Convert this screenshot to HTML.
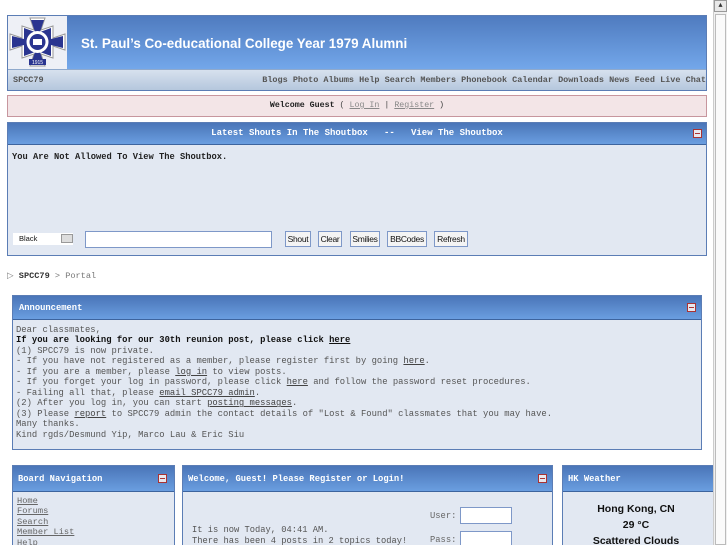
<!DOCTYPE html>
<html style="overflow:hidden;height:545px"><head><meta charset="utf-8"><style>
*{box-sizing:border-box;margin:0;padding:0}
body{width:727px;height:545px;overflow:hidden;background:#fff;font-family:"Liberation Mono",monospace;font-size:8.8px;color:#333;position:relative}
.abs{position:absolute}
.hd{background:linear-gradient(#4a75b8,#6a9ee0);color:#fff;font-weight:bold;border-bottom:1px solid #3d649e}
.body{background:#e2e8f2}
.box{border:1px solid #5b7db5;overflow:hidden}
u{color:#444}
.mini{position:absolute;width:9px;height:9px;background:#e8e8ee;border:1px solid #a33;}
.mini:after{content:"";position:absolute;left:1px;top:3px;width:5px;height:1px;background:#a33}
.btn{position:absolute;top:231px;height:16px;border:1px solid #7e98c8;background:#f4f4f4;font-family:"Liberation Sans",sans-serif;font-size:8.5px;color:#111;text-align:center;line-height:14px;letter-spacing:-0.3px}
</style></head><body>

<!-- header -->
<div class="abs box" style="left:7px;top:15px;width:700px;height:76px;border-color:#5b7db5">
 <div class="abs" style="left:0;top:0;width:698px;height:53px;background:linear-gradient(#4f7bbf,#73a7ea)"></div>
 <div class="abs" style="left:0;top:0;width:59px;height:53px;background:#eef0f6">
  <svg width="59" height="53" viewBox="0 0 59 53">
   <polygon points="22,2 37,2 33,14 45,10 45,22 57,18 57,34 45,30 45,42 33,38 37,50 22,50 26,38 14,42 14,30 2,34 2,18 14,22 14,10 26,14" fill="#fff" stroke="#999" stroke-width="1"/>
   <polygon points="23,4 36,4 32,16 43,12 43,23 55,20 55,32 43,29 43,40 32,36 36,48 23,48 27,36 16,40 16,29 4,32 4,20 16,23 16,12 27,16" fill="#2a3590"/>
   <circle cx="29.5" cy="26" r="11" fill="#fff"/><circle cx="29.5" cy="26" r="8" fill="#2a3590"/><rect x="25" y="23" width="9" height="6" fill="#fff"/>
   <rect x="21" y="43" width="17" height="6" fill="#2a3590"/><text x="29.5" y="48" font-size="5" fill="#fff" text-anchor="middle" font-family="Liberation Sans">1915</text>
  </svg>
 </div>
 <div class="abs" style="left:73px;top:20px;font-family:'Liberation Sans',sans-serif;font-size:13.4px;font-weight:bold;color:#fff;white-space:nowrap">St. Paul’s Co-educational College Year 1979 Alumni</div>
 <div class="abs" style="left:0;top:53px;width:698px;height:21px;background:linear-gradient(#d7e1ee,#b5c7dd);border-top:1px solid #8fa9cc;color:#555;font-weight:bold;font-size:8.5px">
  <span class="abs" style="left:5px;top:5px">SPCC79</span>
  <span class="abs" style="right:0;top:5px;white-space:nowrap">Blogs Photo Albums Help Search Members Phonebook Calendar Downloads News Feed Live Chat</span>
 </div>
</div>

<!-- welcome -->
<div class="abs" style="left:7px;top:95px;width:700px;height:22px;background:#f3e5e7;border:1px solid #c7969e;text-align:center;line-height:20px;font-size:8.3px;color:#444"><b style="color:#222">Welcome Guest</b> ( <u style="color:#888">Log In</u> | <u style="color:#888">Register</u> )</div>

<!-- shoutbox -->
<div class="abs box" style="left:7px;top:122px;width:700px;height:134px">
 <div class="hd abs" style="left:0;top:0;width:698px;height:22px;text-align:center;line-height:21px;font-size:9px">Latest Shouts In The Shoutbox &nbsp;&nbsp;-- &nbsp;&nbsp;View The Shoutbox</div>
 <div class="mini" style="left:685px;top:6px"></div>
 <div class="body abs" style="left:0;top:22px;width:698px;height:110px"></div>
 <div class="abs" style="left:4px;top:29px;font-weight:bold;color:#222;font-size:8.75px">You Are Not Allowed To View The Shoutbox.</div>
</div>
<div class="abs" style="left:13px;top:233px;width:60px;height:12px;background:#fff;font-family:'Liberation Sans',sans-serif;font-size:7.5px;line-height:12px;padding-left:6px;color:#111">Black</div>
<div class="abs" style="left:61px;top:234px;width:12px;height:9px;background:#ddd;border:1px solid #999"></div>
<div class="abs" style="left:85px;top:231px;width:187px;height:17px;background:#fff;border:1px solid #7e98c8"></div>
<div class="btn" style="left:285px;width:26px">Shout</div>
<div class="btn" style="left:318px;width:24px">Clear</div>
<div class="btn" style="left:350px;width:30px">Smilies</div>
<div class="btn" style="left:387px;width:40px">BBCodes</div>
<div class="btn" style="left:434px;width:34px">Refresh</div>

<!-- breadcrumb -->
<div class="abs" style="left:7px;top:271px;color:#777;font-size:8.6px">▷ <b style="color:#333">SPCC79</b> &gt; Portal</div>

<!-- announcement -->
<div class="abs box" style="left:12px;top:295px;width:690px;height:155px">
 <div class="hd abs" style="left:0;top:0;width:688px;height:24px;line-height:24px;padding-left:6px;font-size:8.8px">Announcement</div>
 <div class="mini" style="left:674px;top:7px"></div>
 <div class="body abs" style="left:0;top:24px;width:688px;height:129px;padding:5px 0 0 3px;line-height:10.45px;color:#555;font-size:8.85px;white-space:pre">Dear classmates,
<b style="color:#111">If you are looking for our 30th reunion post, please click <u style="color:#111">here</u></b>
(1) SPCC79 is now private.
- If you have not registered as a member, please register first by going <u>here</u>.
- If you are a member, please <u>log in</u> to view posts.
- If you forget your log in password, please click <u>here</u> and follow the password reset procedures.
- Failing all that, please <u>email SPCC79 admin</u>.
(2) After you log in, you can start <u>posting messages</u>.
(3) Please <u>report</u> to SPCC79 admin the contact details of "Lost &amp; Found" classmates that you may have.
Many thanks.
Kind rgds/Desmund Yip, Marco Lau &amp; Eric Siu</div>
</div>

<!-- bottom boxes -->
<div class="abs box" style="left:12px;top:465px;width:163px;height:90px">
 <div class="hd abs" style="left:0;top:0;width:161px;height:26px;line-height:26px;padding-left:5px;font-size:8.8px">Board Navigation</div>
 <div class="mini" style="left:145px;top:8px"></div>
 <div class="body abs" style="left:0;top:26px;width:161px;height:70px;padding:4px 0 0 4px;line-height:10.4px;font-size:8.7px;color:#666"><u style="color:#666">Home</u><br><u style="color:#666">Forums</u><br><u style="color:#666">Search</u><br><u style="color:#666">Member List</u><br>Help</div>
</div>
<div class="abs box" style="left:182px;top:465px;width:371px;height:90px">
 <div class="hd abs" style="left:0;top:0;width:369px;height:26px;line-height:26px;padding-left:5px;font-size:8.8px">Welcome, Guest! Please Register or Login!</div>
 <div class="mini" style="left:355px;top:8px"></div>
 <div class="body abs" style="left:0;top:26px;width:369px;height:70px"></div>
 <div class="abs" style="left:9px;top:59px;line-height:10.5px;color:#555;font-size:8.75px;white-space:nowrap">It is now Today, 04:41 AM.<br>There has been 4 posts in 2 topics today!</div>
 <div class="abs" style="left:247px;top:45px;color:#666">User:</div>
 <div class="abs" style="left:277px;top:41px;width:52px;height:17px;background:#fff;border:1px solid #7e98c8"></div>
 <div class="abs" style="left:247px;top:69px;color:#666">Pass:</div>
 <div class="abs" style="left:277px;top:65px;width:52px;height:17px;background:#fff;border:1px solid #7e98c8"></div>
</div>
<div class="abs box" style="left:562px;top:465px;width:160px;height:90px">
 <div class="hd abs" style="left:0;top:0;width:158px;height:26px;line-height:26px;padding-left:5px;font-size:8.8px">HK Weather</div>
 <div class="body abs" style="left:0;top:26px;width:158px;height:70px;text-align:center;font-family:'Liberation Sans',sans-serif;font-weight:bold;font-size:10.5px;color:#111;line-height:16px;padding-top:9px;padding-right:12px">Hong Kong, CN<br>29 °C<br>Scattered Clouds</div>
</div>

<!-- scrollbar -->
<div class="abs" style="left:713px;top:0;width:14px;height:545px;background:#f0f0f0;border-left:1px solid #ccc;z-index:5"></div>
<div class="abs" style="left:714px;top:0;width:13px;height:12px;background:#e8e8e8;border:1px solid #999;font-size:7px;text-align:center;line-height:10px;z-index:6">▲</div>
<div class="abs" style="left:715px;top:14px;width:11px;height:531px;background:#fafafa;border:1px solid #bbb;z-index:6"></div>
</body></html>
